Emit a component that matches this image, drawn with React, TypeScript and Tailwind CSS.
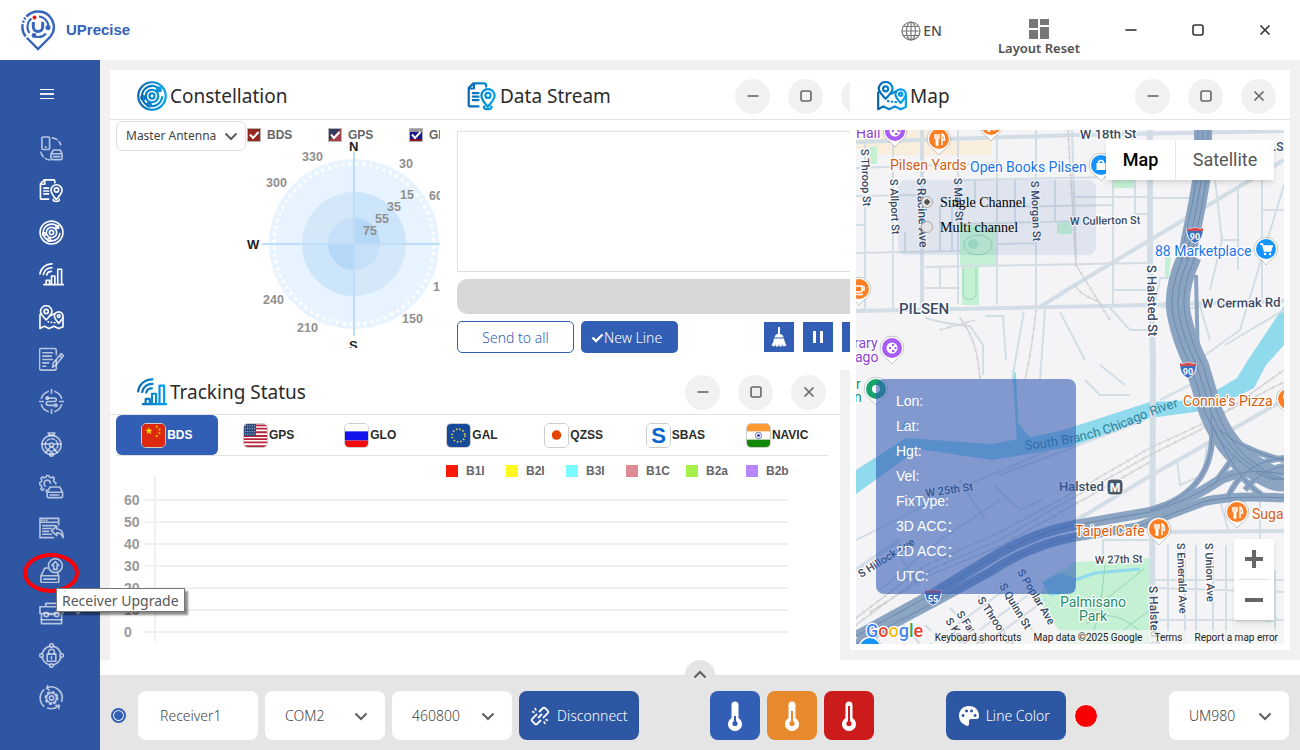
import { clsx } from 'clsx';
import type { ReactNode } from 'react';

type IconProps = { className?: string; blue?: boolean };

const Glyph = ({
  className,
  blue,
  children,
}: IconProps & { children: ReactNode }) => (
  <svg
    viewBox="0 0 26 26"
    className={clsx('shrink-0', className)}
    fill="none"
    stroke={blue ? 'url(#blueStroke)' : 'currentColor'}
    strokeWidth={blue ? 1.9 : 1.7}
    strokeLinecap="round"
    strokeLinejoin="round"
  >
    {children}
  </svg>
);

/* ---------- sidebar / panel icons ---------- */

const StreamIcon = (p: IconProps) => (
  <Glyph {...p}>
    <path d="M10 22H2.500q-1 0-1-1V6l4-4h9.500q1.500 0 1.500 1.500V5M1.500 6.500H6V2M5 10.500h5M5 13.500h5M5 16.500h5" />
    <path d="M18 22.500c-3-4-5.500-6.500-5.500-9.800a5.700 5.700 0 0 1 11.400 0C24 16 21 18.500 18 22.500Z" />
    <circle cx="18.200" cy="12.500" r="2.200" />
    <path d="M15 22c-2 3.200 8 3.200 6 0" />
  </Glyph>
);

const OrbitIcon = (p: IconProps) => (
  <Glyph {...p}>
    <circle cx="13" cy="13" r="11.900" />
    <path d="M20.500 8.500A8.700 8.700 0 1 0 21.700 14M17.500 5.500A8.700 8.700 0 0 0 13 4.300" />
    <circle cx="13" cy="13" r="5.400" />
    <circle cx="13" cy="13" r="2.200" />
    <circle cx="19" cy="7.200" r="1.500" />
    <circle cx="5.200" cy="14.500" r="1.500" />
    <circle cx="10.500" cy="20.500" r="1.500" />
  </Glyph>
);

const SignalIcon = (p: IconProps) => (
  <Glyph {...p}>
    <path d="M1 12.500A12 12 0 0 1 13.500 2M4.500 13A8.500 8.500 0 0 1 13.500 6M8 13.500A5 5 0 0 1 13 9.800" />
    <path d="M5 23.500h20.500M7.500 23v-4h3.500v4M13 23v-8.500h3.500V23M19.500 23V7.500H23.500V23" />
  </Glyph>
);

const MapIcon = (p: IconProps) => (
  <Glyph {...p}>
    <path d="M2.500 9L1 10v14.500l4.500-2.500 5 2.500 5-2.500 5 2.500L25 22.500V13" />
    <path d="M7.500 15.500C4 11.500 1.500 9.500 1.500 6.800a6 6 0 0 1 12 0C13.500 9.500 11 11.500 7.500 15.500Z" />
    <circle cx="7.500" cy="6.800" r="2.200" />
    <path d="M20.500 19c-3-3.500-4.500-5-4.500-7.300a4.500 4.500 0 0 1 9 0C25 14 23.500 15.500 20.500 19Z" />
    <circle cx="20.500" cy="11.500" r="1.400" />
    <path d="M12.500 11l3.500-2M9.500 17.500h.5M12.800 18h.5M16 18.300h.5" />
  </Glyph>
);

const LinkIcon = (p: IconProps) => (
  <Glyph {...p}>
    <rect x="3" y="1" width="8" height="13" rx="1" />
    <path d="M6.500 11.500h1M14 2c4 .5 7 3 8.500 7M2 17c1 4 4 7 9 8" strokeDasharray="5 3" />
    <path d="M15 14.500h7l2 4v5q0 1-1 1H13.500q-1 0-1-1v-5ZM12.500 18.500H24M15 21.500h6.500" />
  </Glyph>
);

const EditIcon = (p: IconProps) => (
  <Glyph {...p}>
    <path d="M18 14v8q0 2-2 2H2.500q-2 0-2-2V3.500q0-2 2-2H16q2 0 2 2V8" />
    <path d="M4 6h10M4 9.500h9M4 13h10M4 16.500h6M4 20h3" />
    <path d="M14 21l1-4.500 8-9.500 2.500 2-8 9.800ZM21.500 9l2.300 2" />
  </Glyph>
);

const TargetIcon = (p: IconProps) => (
  <Glyph {...p}>
    <path d="M16.500 2.500a11 11 0 0 1 7 7M23.500 16.500a11 11 0 0 1-7 7M9.500 23.500a11 11 0 0 1-7-7M2.500 9.500a11 11 0 0 1 7-7" />
    <path d="M13 .5v4M13 21.500v4M.5 13h4M21.500 13h4" />
    <path d="M9 9.500h7q2 0 2 1.700T16 13h-6q-2.500 0-2.500 2T10 17h5.500" />
    <circle cx="8.500" cy="9.500" r="1.300" />
    <circle cx="17.500" cy="17" r="1.300" />
  </Glyph>
);

const WheelIcon = (p: IconProps) => (
  <Glyph {...p}>
    <path d="M9.500 1h7l-1.500 2.500h-4Z" />
    <circle cx="13" cy="13.500" r="10" />
    <circle cx="13" cy="13.500" r="6.500" strokeDasharray="3 2" />
    <circle cx="13" cy="13.500" r="2" />
    <path d="M3 12.500h7.500M15.500 12.500H23M12 15.500l-5 6M14 15.500l5 6" />
    <circle cx="13" cy="23.500" r="1.800" />
  </Glyph>
);

const DeviceGearIcon = (p: IconProps) => (
  <Glyph {...p}>
    <path d="M8 16.500l-.5 1.500M5 15.500l-1.500 1.500-1.500-1.500L3 13.500l-.8-1.800L.5 11V9l1.700-.7L3 6.500l-1-2L3.500 3l2 1 1.800-.8L8 1.500h2l.7 1.700 1.800.8 2-1L16 4.500l-1 2 .8 1.800 1.700.7v1.500" />
    <path d="M6.500 12.500a3.400 3.400 0 1 1 5.500-3" />
    <path d="M11.500 13.500h10l3 5.500v4.500q0 1-1 1h-14q-1 0-1-1V19ZM8.500 19h16M11.500 21.800h9" />
  </Glyph>
);

const WindowReplyIcon = (p: IconProps) => (
  <Glyph {...p}>
    <path d="M20.500 9V2.500H1v20h14M1 6.500h19.500M3 4.500h.3M5.500 4.500h.3M8 4.500h.3" />
    <path d="M4 10h13M4 13h9M4 16h6M4 19h9" />
    <path d="M18.500 10.500L13 15.500l5.500 5v-3q5 0 6.500 5 .5-9-6.500-9Z" />
  </Glyph>
);

const UpgradeIcon = (p: IconProps) => (
  <Glyph {...p}>
    <circle cx="17" cy="8" r="7.200" />
    <path d="M17 3.800l3.800 4h-2v4h-3.600v-4h-2Z" />
    <path d="M8.500 10.500H6L2 18.500v6q0 1 1 1h16.500q1 0 1-1v-6l-1-2.500M2 18.500h18.500M5 22h12.500" />
  </Glyph>
);

const ToolboxIcon = (p: IconProps) => (
  <Glyph {...p}>
    <path d="M7 6V2.500h12V6M1 6h24v7H1ZM2.500 13v10.500h21V13M10.500 14h5" />
    <circle cx="7.500" cy="14" r="2.300" />
    <circle cx="18.500" cy="14" r="2.300" />
    <path d="M2.500 19.500h21" />
  </Glyph>
);

const LockOrbitIcon = (p: IconProps) => (
  <Glyph {...p}>
    <path d="M10.500 3.500Q5 5.500 3.500 10.500M15.500 3.500Q21 5.500 22.500 10.500M3.500 15.500q1.500 5 7 7M22.500 15.500q-1.500 5-7 7" />
    <circle cx="13" cy="2.500" r="1.800" />
    <circle cx="13" cy="23.500" r="1.800" />
    <circle cx="2.500" cy="13" r="1.800" />
    <circle cx="23.500" cy="13" r="1.800" />
    <rect x="8.500" y="11.500" width="9" height="7.500" />
    <path d="M10 11.500V9.500a3 3 0 0 1 6 0v2M13 14v2.500" />
  </Glyph>
);

const GearCycleIcon = (p: IconProps) => (
  <Glyph {...p}>
    <path d="M5 22A11.500 11.500 0 0 1 5 5M9 2.500A11.500 11.500 0 0 1 23.500 17M20.500 21.500A11.500 11.500 0 0 1 9 24M9 .8L7.800 3.500 10.500 5M20.500 24.500l.5-3.500-3.500.3" />
    <circle cx="13" cy="13.500" r="5.200" />
    <circle cx="13" cy="13.500" r="2.200" />
    <circle cx="13" cy="13.500" r="6.500" strokeDasharray="2 3.100" />
  </Glyph>
);

const NAV = [
  { label: 'Connection', Icon: LinkIcon, active: false },
  { label: 'Data Stream', Icon: StreamIcon, active: true },
  { label: 'Constellation', Icon: OrbitIcon, active: true },
  { label: 'Tracking Status', Icon: SignalIcon, active: true },
  { label: 'Map', Icon: MapIcon, active: true },
  { label: 'Record', Icon: EditIcon, active: false },
  { label: 'Target', Icon: TargetIcon, active: false },
  { label: 'Dashboard', Icon: WheelIcon, active: false },
  { label: 'Receiver Config', Icon: DeviceGearIcon, active: false },
  { label: 'Replay', Icon: WindowReplyIcon, active: false },
  { label: 'Receiver Upgrade', Icon: UpgradeIcon, active: false },
  { label: 'Tool Box', Icon: ToolboxIcon, active: false },
  { label: 'Authorization', Icon: LockOrbitIcon, active: false },
  { label: 'Settings', Icon: GearCycleIcon, active: false },
];

/* ---------- small shared parts ---------- */

const MinLine = () => (
  <svg viewBox="0 0 14 14" className="size-3.5" stroke="currentColor" strokeWidth="1.600">
    <path d="M1.500 7h11" />
  </svg>
);
const MaxBox = () => (
  <svg viewBox="0 0 14 14" className="size-3.5" fill="none" stroke="currentColor" strokeWidth="1.600">
    <rect x="2" y="2" width="10" height="10" rx="2" />
  </svg>
);
const CloseX = () => (
  <svg viewBox="0 0 14 14" className="size-3.5" stroke="currentColor" strokeWidth="1.600">
    <path d="M2.500 2.500l9 9M11.500 2.500l-9 9" />
  </svg>
);
const Chevron = ({ className }: { className?: string }) => (
  <svg
    viewBox="0 0 14 14"
    className={clsx('pointer-events-none size-3.5', className)}
    fill="none"
    stroke="#5e5e5e"
    strokeWidth="2"
  >
    <path d="M1.500 4.500L7 10l5.500-5.500" />
  </svg>
);

const PanelButtons = () => (
  <div className="flex gap-[18px] text-[#666]">
    {[
      { label: 'Minimize', Icon: MinLine },
      { label: 'Maximize', Icon: MaxBox },
      { label: 'Close', Icon: CloseX },
    ].map(({ label, Icon }) => (
      <button
        key={label}
        aria-label={label}
        className="flex size-[35px] items-center justify-center rounded-full bg-[#f1f1f1]"
      >
        <Icon />
      </button>
    ))}
  </div>
);

const PanelHeader = ({
  title,
  icon,
  className,
  buttons = true,
}: {
  title: string;
  icon: ReactNode;
  className?: string;
  buttons?: boolean;
}) => (
  <div
    className={clsx(
      'flex shrink-0 items-center justify-between border-b border-[#e2e2e2] pr-[14px] pl-[27px]',
      className
    )}
  >
    <h2 className="flex items-center gap-[3px] text-[19px] whitespace-nowrap text-[#2b2b2b]">
      {icon}
      {title}
    </h2>
    {buttons && <PanelButtons />}
  </div>
);

/* ---------- header ---------- */

const Logo = () => (
  <svg viewBox="0 0 34 41" className="h-[41px] w-[34px]" fill="none" stroke="#3564bd">
    <path d="M17 1.500a15.500 15.500 0 0 1 12.500 25L17 39 6 28" strokeWidth="2.400" />
    <path d="M17 1.500A15.500 15.500 0 0 0 6 28" strokeWidth="2.400" strokeDasharray="13 1.500 2 1.500 2 1.500" />
    <path d="M18 6.500a10.500 10.500 0 0 1 9 13.500M25 23.500a10.500 10.500 0 0 1-10.500 3.200M8.500 23A10.500 10.500 0 0 1 10.500 8.500" strokeWidth="2" />
    <path d="M12.300 12v4.800a4.700 4.700 0 0 0 9.400 0V12" strokeWidth="3" />
    <circle cx="13.500" cy="7.500" r="2" fill="#f01010" stroke="none" />
    <circle cx="27" cy="17.500" r="2.500" fill="#3564bd" stroke="none" />
    <circle cx="13" cy="25.500" r="2.400" fill="#3564bd" stroke="none" />
  </svg>
);

const Header = () => (
  <header className="flex h-[60px] shrink-0 items-center justify-between bg-white pr-[28px] pl-[21px]">
    <div className="flex items-center gap-[11px]">
      <Logo />
      <h1 className="font-['Liberation_Sans',sans-serif] text-[15px] font-bold text-[#3461b9]">
        UPrecise
      </h1>
    </div>
    <div className="flex items-center">
      <button className="mr-[56px] flex items-center gap-0.5 pt-0.5 text-sm font-medium text-[#4d4d4d]">
        <svg viewBox="0 0 20 20" className="size-5" fill="none" stroke="#777" strokeWidth="1.200">
          <circle cx="10" cy="10" r="9" />
          <ellipse cx="10" cy="10" rx="4.500" ry="9" />
          <path d="M10 1v18M1 10h18M2.500 5.500h15M2.500 14.500h15" />
        </svg>
        EN
      </button>
      <button className="mr-[44px] flex flex-col items-center pt-4 text-[13px] leading-[17px] font-semibold text-[#505050]">
        <svg viewBox="0 0 20 20" className="mb-px size-5" fill="#777">
          <rect width="9" height="9" />
          <rect x="11" width="9" height="6" />
          <rect y="11" width="9" height="9" />
          <rect x="11" y="8" width="9" height="12" />
        </svg>
        Layout Reset
      </button>
      <div className="flex gap-[53px] text-[#333]">
        <button aria-label="Minimize window"><MinLine /></button>
        <button aria-label="Maximize window"><MaxBox /></button>
        <button aria-label="Close window"><CloseX /></button>
      </div>
    </div>
  </header>
);

/* ---------- sidebar ---------- */

const Sidebar = () => (
  <nav className="relative z-10 w-[100px] shrink-0 bg-[#2e56a3] text-white">
    <button aria-label="Menu" className="mt-[25px] ml-10 flex h-[22px] flex-col gap-[3px] pt-1">
      <span className="h-px w-3.5 bg-white" />
      <span className="h-0.5 w-3.5 bg-white/90" />
      <span className="h-px w-3.5 bg-white" />
    </button>
    <ul className="mt-5 flex h-[592px] flex-col justify-between">
      {NAV.map(({ label, Icon, active }) => (
        <li key={label} className="relative">
          <button aria-label={label} className="flex h-[42px] w-full items-center justify-center pl-0.5">
            <Icon className={clsx('size-[25px]', active ? 'text-white' : 'text-white/65')} />
          </button>
          {label === 'Tool Box' && (
            <span className="absolute top-[19px] left-[74px] border-x-4 border-t-4 border-x-transparent border-t-[#a9bcdf]" />
          )}
          {label === 'Receiver Upgrade' && (
            <>
              <svg viewBox="0 0 58 42" className="pointer-events-none absolute top-0.5 left-[22px] h-[42px] w-[58px]">
                <ellipse cx="29" cy="21" rx="26" ry="18" fill="none" stroke="#fb0007" strokeWidth="4" />
              </svg>
              <div
                role="tooltip"
                className="absolute top-[38px] left-[56px] z-20 h-6 border border-[#767676] bg-white px-[5px] text-sm leading-[23px] whitespace-nowrap text-[#575757] shadow-[3px_3px_2px_rgba(0,0,0,0.45)]"
              >
                Receiver Upgrade
              </div>
            </>
          )}
        </li>
      ))}
    </ul>
  </nav>
);

/* ---------- constellation ---------- */

const FLAG_BOXES = [
  { name: 'BDS', bg: 'bg-[#93281f]' },
  { name: 'GPS', bg: 'bg-[linear-gradient(135deg,#343a5c_50%,#a5404a_50%)]' },
  { name: 'GLO', bg: 'bg-[linear-gradient(#999_25%,#1a1a90_25%_80%,#8f1020_80%)]' },
];

const BEARINGS = [
  ['330', 302, 161],
  ['300', 266, 187],
  ['30', 399, 168],
  ['60', 429, 200],
  ['240', 263, 304],
  ['210', 297, 332],
  ['150', 402, 323],
  ['120', 433, 291],
  ['15', 400, 199],
  ['35', 387, 211],
  ['55', 375, 223],
  ['75', 363, 235],
] as const;

const SkyPlot = () => (
  <svg
    viewBox="110 138 330 210"
    className="pointer-events-none -mt-[11px] block w-full font-['Liberation_Sans',sans-serif] font-bold"
  >
    <circle cx="354" cy="244" r="85" fill="#e7f3fe" />
    {Array.from({ length: 72 }, (_, i) => (
      <path key={i} d="M354 161l2.200 4.500h-4.400Z" fill="#fff" transform={`rotate(${i * 5 + 2} 354 244)`} />
    ))}
    <circle cx="354" cy="244" r="52" fill="#d5e8fa" />
    <path d="M354 244V192A52 52 0 0 1 406 244ZM354 244v52A52 52 0 0 1 302 244Z" fill="#cde5fa" />
    <circle cx="354" cy="244" r="26" fill="#c5e0f8" />
    <path d="M354 244V218A26 26 0 0 1 380 244ZM354 244v26A26 26 0 0 1 328 244Z" fill="#b5d8f7" />
    <path d="M354 152v184M262 244h178" stroke="#bfdcf9" strokeWidth="2" />
    <g fontSize="12.500" fill="#8f8f8f">
      {BEARINGS.map(([t, x, y]) => (
        <text key={t} x={x} y={y}>
          {t}
        </text>
      ))}
    </g>
    <g fontSize="13" fill="#222">
      <text x="349" y="151">N</text>
      <text x="247" y="249">W</text>
      <text x="349" y="350">S</text>
    </g>
  </svg>
);

const Constellation = () => (
  <section className="overflow-hidden bg-white">
    <PanelHeader
      title="Constellation"
      icon={<OrbitIcon blue className="size-[30px]" />}
      className="h-[50px] pt-[3px]"
      buttons={false}
    />
    <div className="flex h-[29px] items-center pl-1.5">
      <div className="relative mt-0.5 w-[130px] shrink-0">
        <select
          aria-label="Antenna"
          className="h-[30px] w-full appearance-none rounded-md border border-[#e0e0e0] bg-white pl-[9px] text-xs text-[#444]"
        >
          <option>Master Antenna</option>
        </select>
        <Chevron className="absolute top-2 right-2" />
      </div>
      {FLAG_BOXES.map(({ name, bg }) => (
        <label
          key={name}
          className="relative flex w-[81px] shrink-0 items-center gap-1.5 pl-px font-['Liberation_Sans',sans-serif] text-xs font-bold text-[#666]"
        >
          <input
            type="checkbox"
            defaultChecked
            className={clsx('size-3.5 shrink-0 appearance-none border border-[#b5b5b5]', bg)}
          />
          <svg viewBox="0 0 14 14" className="pointer-events-none absolute left-px size-3.5" fill="none" stroke="#fff" strokeWidth="2">
            <path d="M3 6.500l3 3.500 5.500-6" />
          </svg>
          {name}
        </label>
      ))}
    </div>
    <SkyPlot />
  </section>
);

/* ---------- data stream ---------- */

const DataStream = () => (
  <section className="overflow-hidden bg-white">
    <div className="w-[450px]">
      <PanelHeader
        title="Data Stream"
        icon={<StreamIcon blue className="size-[30px]" />}
        className="h-[50px] pt-[3px]"
      />
      <div className="pt-[11px] pl-[17px]">
        <textarea aria-label="Received data" className="block h-[141px] w-full resize-none border border-[#e0e0e0]" />
        <input aria-label="Command" disabled className="mt-[7px] h-[35px] w-full rounded-[10px] bg-[#d8d8d8] px-3" />
        <div className="mt-[7px] flex items-center text-sm font-light">
          <button className="h-8 w-[117px] rounded-[5px] border border-[#335eb5] pt-px text-[#335eb5]">
            Send to all
          </button>
          <button className="ml-[7px] flex h-8 w-[97px] items-center rounded-[5px] bg-[#335eb5] pt-px pl-2.5 text-white">
            <svg viewBox="0 0 13 13" className="size-[13px]" fill="none" stroke="#fff" strokeWidth="2.400">
              <path d="M1.500 6.500l3.500 3.500 6.500-6.500" />
            </svg>
            New Line
          </button>
          <button aria-label="Clear" className="ml-[86px] flex size-[30px] items-center justify-center bg-[#335eb5]">
            <svg viewBox="0 0 16 20" className="h-5 w-4" fill="#fff">
              <path d="M7 0h2v7q3 0 3.500 3.500h-9Q4 7 7 7ZM3 11.500h10q.5 4 2.500 7l-3 1-1.500-2-.5 2.200-2-.2L8 17l-.8 2.500-2 .2L5 17.500l-1.500 2-3-1q2-3 2.500-7Z" />
            </svg>
          </button>
          <button aria-label="Pause" className="ml-[9px] flex size-[30px] items-center justify-center gap-1 bg-[#335eb5]">
            <span className="h-3 w-[3px] bg-white" />
            <span className="h-3 w-[3px] bg-white" />
          </button>
          <button aria-label="Save" className="ml-[9px] size-[30px] bg-[#335eb5]" />
        </div>
      </div>
    </div>
  </section>
);

/* ---------- tracking status ---------- */

const STAR = 'M0-4l1 2.800h3L1.600.6l.9 3L0 1.800l-2.500 1.800.9-3L-4-1.200h3Z';

const FLAGS: Record<string, ReactNode> = {
  BDS: (
    <>
      <rect width="25" height="25" fill="#de2910" />
      <path d={STAR} transform="translate(7.500 7.500)" fill="#ffde00" />
      <path d="M15 2h2v2h-2ZM18 5h2v2h-2ZM18 9h2v2h-2ZM15 12h2v2h-2Z" fill="#e8b800" />
    </>
  ),
  GPS: (
    <>
      <rect width="25" height="25" fill="#fff" />
      <path d="M0 1.500h25M0 5h25M0 9h25M0 13h25M0 16.500h25M0 20h25M0 24h25" stroke="#b5263c" strokeWidth="2" />
      <rect width="13" height="13" fill="#2f4a7d" />
      <path d="M1 2h11M1 5h11M1 8h11M1 11h11" stroke="#c9d3e6" strokeDasharray="1 1.500" />
    </>
  ),
  GLO: (
    <>
      <rect width="25" height="25" fill="#fff" />
      <rect y="8" width="25" height="10" fill="#1414ef" />
      <rect y="18" width="25" height="7" fill="#f50a0a" />
    </>
  ),
  GAL: (
    <>
      <rect width="25" height="25" fill="#174a99" />
      <circle cx="12.500" cy="12.500" r="7" fill="none" stroke="#f4e04a" strokeWidth="1.800" strokeDasharray="1.500 2.170" />
    </>
  ),
  QZSS: (
    <>
      <rect width="25" height="25" fill="#fff" />
      <circle cx="12.500" cy="12" r="5.200" fill="#e64400" />
    </>
  ),
  SBAS: (
    <>
      <rect width="25" height="25" fill="#fff" />
      <text x="12.500" y="21" textAnchor="middle" fontSize="24" fontWeight="bold" fill="#0c66cf">
        S
      </text>
    </>
  ),
  NAVIC: (
    <>
      <rect width="25" height="25" fill="#fff" />
      <rect width="25" height="8" fill="#ff9a35" />
      <rect y="17" width="25" height="8" fill="#138808" />
      <circle cx="12.500" cy="12.500" r="3.500" fill="#e8e8ff" stroke="#7676bb" />
      <circle cx="12.500" cy="12.500" r="1.400" fill="#22228a" />
    </>
  ),
};

const BANDS = [
  { name: 'B1I', bg: 'bg-[#fb1a0a]' },
  { name: 'B2I', bg: 'bg-[#fff720]' },
  { name: 'B3I', bg: 'bg-[#7afbff]' },
  { name: 'B1C', bg: 'bg-[#de8a92]' },
  { name: 'B2a', bg: 'bg-[#a4f04c]' },
  { name: 'B2b', bg: 'bg-[#b886fb]' },
];

const TrackingStatus = () => (
  <section className="mr-2.5 flex flex-1 flex-col bg-white">
    <PanelHeader title="Tracking Status" icon={<SignalIcon blue className="size-[30px]" />} className="h-[45px]" />
    <div className="mr-3 ml-1.5 grid grid-cols-7 border-b border-[#e2e2e2] font-['Liberation_Sans',sans-serif]">
      {Object.keys(FLAGS).map((name, i) => (
        <button
          key={name}
          className={clsx(
            'flex h-10 items-center justify-center gap-px rounded-md text-xs font-bold',
            i === 0 ? 'bg-[#335eb5] text-white' : 'text-[#2b2b2b]'
          )}
        >
          <span className="size-[25px] overflow-hidden rounded-[5px] border border-[#ccc]">
            <svg viewBox="0 0 25 25" className="size-full">
              {FLAGS[name]}
            </svg>
          </span>
          {name}
        </button>
      ))}
    </div>
    <ul className="flex h-[30px] items-center justify-end pr-[34px] font-['Liberation_Sans',sans-serif] text-xs font-bold text-[#666]">
      {BANDS.map(({ name, bg }) => (
        <li key={name} className="flex w-[60px] items-center gap-2">
          <span className={clsx('size-3', bg)} />
          {name}
        </li>
      ))}
    </ul>
    <svg viewBox="110 486 730 174" className="block w-full overflow-visible">
      <path d="M155 477v165" stroke="#f0f0f0" strokeWidth="2" />
      {[60, 50, 40, 30, 20, 10, 0].map((v, i) => (
        <g key={v}>
          <path d={`M145 ${500 + i * 22}h643`} stroke="#f0f0f0" strokeWidth="2" />
          <text
            x="124"
            y={505 + i * 22}
            className="font-['Liberation_Sans',sans-serif] text-[14px] font-bold"
            fill="#999"
          >
            {v}
          </text>
        </g>
      ))}
    </svg>
  </section>
);

/* ---------- map ---------- */

const FORK = 'M-4-5v3.500q0 1.500 1.300 1.500V6h1.400V0Q0 0 0-1.500V-5M-2-5v4M3 6V-5q2.500 1 2.500 6H3';

const Pin = ({ x, y, color, kind }: { x: number; y: number; color: string; kind?: string }) => (
  <g transform={`translate(${x} ${y})`}>
    <path d="M0 16q-3-4-7-6.500a11.800 11.800 0 1 1 14 0Q3 12 0 16Z" fill="#fff" stroke="#0003" strokeWidth="1" />
    <circle r="10" fill={color} />
    {kind === 'food' && <path d={FORK} fill="none" stroke="#fff" strokeWidth="1.500" />}
    {kind === 'cart' && (
      <>
        <path d="M-6-5h2.500l2 7h6l1.500-5h-8" fill="none" stroke="#fff" strokeWidth="1.600" />
        <path d="M-3-3H6.500L5 2H-1.500Z" fill="#fff" />
        <circle cx="-1" cy="5" r="1.200" fill="#fff" />
        <circle cx="4" cy="5" r="1.200" fill="#fff" />
      </>
    )}
    {kind === 'bag' && (
      <>
        <rect x="-4.500" y="-2" width="9" height="7" fill="#fff" />
        <path d="M-2.500-2a2.500 2.500 0 0 1 5 0" fill="none" stroke="#fff" strokeWidth="1.500" />
      </>
    )}
    {kind === 'palette' && (
      <>
        <circle r="5.500" fill="#fff" />
        <path d="M-3-1h2v2h-2ZM0-4h2v2H0ZM2.500-1h2v2h-2ZM0 2h2.500v2H0Z" fill={color} />
      </>
    )}
    {kind === 'cup' && <path d="M-4-3h7v4q0 2-2 2h-3q-2 0-2-2ZM3-2h2v3H3M-5 5.500h9" fill="none" stroke="#fff" strokeWidth="1.600" />}
    {kind === 'dot' && <circle r="4" fill="#fff" />}
  </g>
);

const Shield = ({ x, y, n }: { x: number; y: number; n: string }) => (
  <g transform={`translate(${x} ${y})`}>
    <path d="M-8-7L-5.500-6 0-7.500 5.500-6 8-7Q9.500 4 0 8.500-9.500 4-8-7Z" fill="#3a70c4" stroke="#fff" strokeWidth="1" />
    <path d="M-8-7L-5.500-6 0-7.500 5.500-6 8-7V-4H-8Z" fill="#d64b4b" />
    <text y="4.500" textAnchor="middle" fontSize="9" fontWeight="bold" fill="#fff">
      {n}
    </text>
  </g>
);

// text, x, y, rotation, size
const STREETS = [
  ['W 18th St', 1080, 139, -1, 13],
  ['.S', 1273, 151, 0, 12],
  ['S Throop St', 861, 149, 88, 11],
  ['S Allport St', 890, 179, 88, 11],
  ['S Racine Ave', 917, 178, 88, 12],
  ['S May St', 954, 178, 88, 11],
  ['S Morgan St', 1031, 181, 88, 11],
  ['W Cullerton St', 1070, 225, -1, 11],
  ['S Halsted St', 1147, 265, 89, 13],
  ['W Cermak Rd', 1202, 308, -1, 13],
  ['Halsted', 1059, 491, 0, 13],
  ['W 25th St', 926, 497, -8, 11],
  ['S Hillock Ave', 861, 578, -32, 11],
  ['W 27th St', 1095, 564, -2, 11],
  ['S Emerald Ave', 1177, 543, 88, 11],
  ['S Union Ave', 1205, 543, 88, 11],
  ['S Halsted St', 1149, 586, 88, 12],
  ['S Poplar Ave', 1017, 572, 59, 11],
  ['S Quinn St', 999, 586, 59, 11],
  ['S Throop St', 977, 600, 56, 11],
  ['S Farrell St', 956, 614, 56, 11],
  ['S Keeley St', 945, 621, 56, 11],
] as const;

const PLACES = [
  ['Hall', 856, 138, '#8a45cf'],
  ['Pilsen Yards', 890, 170, '#d65b10'],
  ['Open Books Pilsen', 970, 172, '#1a73e8'],
  ['88 Marketplace', 1155, 256, '#1a73e8'],
  ['rary', 854, 348, '#8a45cf'],
  ['ago', 855, 362, '#8a45cf'],
  ['r', 856, 389, '#1e8e65'],
  ['n', 854, 402, '#1e8e65'],
  ["Connie's Pizza", 1183, 406, '#d65b10'],
  ['Taipei Cafe', 1075, 536, '#d65b10'],
  ['Suga', 1252, 519, '#d65b10'],
  ['Palmisano', 1060, 607, '#1e8e65'],
  ['Park', 1079, 621, '#1e8e65'],
] as const;

const MINOR_ROADS =
  'M856 168L1000 163M856 196L922 195M856 225h9M960 224L1075 221M856 253L960 251M997 244L1036 243M997 207L1113 205M925 267L1147 263M960 180L1113 177' +
  'M865 130V310M893 130V310M958 130V304M997 130V305M1036 130V307M1015 180V225M1055 180V222M1072 130L1076 260M1113 178V305M1135 175V214' +
  'M1075 197H1150M1135 214H1150M1153 198H1190M1153 155L1190 154M1113 290H1150M1155 304L1160 278H1168M1238 190V270M1262 180V300M1262 210H1284M1220 240H1240M1215 180L1222 240L1210 290M1100 155L1150 150' +
  'M940 268V288M925 288H960M952 205V251M975 180V208M905 253V232M940 205V251M1036 268V300' +
  'M925 318Q950 325 970 326L983 345V375M985 316H1003L1006 360M1024 311L1012 380M1045 310L1040 380M1060 312L1085 360M1110 308L1130 330H1150' +
  'M1155 305Q1185 312 1200 306L1210 340M1284 185L1240 330L1190 366M1284 310L1225 345' +
  'M856 540L960 488L1050 450M880 590L940 540L1000 500M900 556L918 585M960 480L985 520M995 486L1020 510L1042 500M1000 475L1145 420' +
  'M1155 580H1284M1155 588L1284 592M1168 545V644M1185 545V644M1196 545V644M1213 545V644M1226 545V644M1155 620H1284M1103 555V540H1150M1220 500L1228 530M1260 500V540M1275 570V644' +
  'M930 644L1010 586M960 644L1035 590M985 644L1045 600M925 625L945 644M950 608L985 644M978 596L1015 644M1000 582L1042 644M890 610L920 644' +
  'M1160 400L1200 380M1085 380L1100 395H1130M1100 365L1125 385M1177 460L1180 485L1203 475L1207 445';

const MAJOR_ROADS =
  'M856 142L1075 135L1284 131M856 311L1150 305L1284 301M922 130V235V310M1040 307L1075 285L1150 240L1284 160M856 570L900 540M1070 524L1150 476L1210 442L1284 400M1155 532L1284 531';

const RAILS =
  'M960 318Q978 340 980 380M1036 310Q1032 350 1025 380M1075 285Q1080 295 1100 302M1068 130L1076 265L1110 320M856 625L930 570L1000 540L1060 505L1150 455L1200 430L1284 370M856 618L925 566L1000 532L1060 500L1150 448L1200 425L1284 382M870 612L930 575L1000 546L1065 510L1150 462M940 330L975 320';

const I90 = 'M1190 255Q1174 290 1179 315T1197 366L1211 412Q1225 448 1252 466T1284 478';
const I90_RAMP = 'M1211 415Q1216 455 1200 478T1150 510M1213 425Q1235 478 1262 495M1228 497Q1243 462 1284 458M1220 430Q1245 452 1284 460M1235 455L1215 483M1245 490Q1260 470 1284 466';
const I55 = 'M856 636L927 597 983 563Q1030 533 1075 525L1150 512Q1190 500 1215 483T1284 474';
const I55_SOUTH = 'M856 644L935 602 990 572Q1030 545 1075 537L1137 527 1203 502Q1230 495 1284 498';

const MapCanvas = () => (
  <svg
    viewBox="856 130 428 514"
    preserveAspectRatio="xMinYMin slice"
    className="absolute inset-0 size-full font-[Roboto,sans-serif]"
    fill="none"
  >
    <rect x="856" y="130" width="428" height="514" fill="#f4f3f5" />
    <path d="M856 130h90v12l46-2v15H870l-14-8Z" fill="#f8eedb" />
    <path
      d="M870 147h7v17h-7ZM960 225h37v41h-18v39h-17v-39h-2ZM1057 222h15v12h-15ZM1112 178h23v10h-23ZM1165 257h6l-2 20h-4ZM1265 617h12v5h-12ZM1048 578L1075 562 1150 558V644H1068L1038 600Z"
      fill="#c4f0d4"
    />
    <ellipse cx="978" cy="245" rx="14" ry="10" stroke="#93d6b5" />
    <circle cx="973" cy="244" r="5" fill="#a4e3c2" />
    <path d="M963 268V295a7 7 0 0 0 13 0V268" stroke="#93d6b5" />
    <path d="M1042 582L1060 573 1075 578V592L1062 594 1050 596Z" fill="#8fdaec" />
    <path d="M1075 580L1095 573 1140 569" stroke="#8fdaec" strokeWidth="3" />
    <path d="M1090 640L1105 600 1145 568M1105 565L1100 610M1085 625Q1110 600 1150 640M1150 610L1110 640" stroke="#93d6b5" />
    {/* river */}
    <path d="M1284 306V345L1266 365 1254 388 1210 410 1150 418 1070 447 992 460 918 449 856 494V470L906 438 992 444 1060 431 1150 402 1200 400 1237 378 1248 360Z" fill="#8fdaec" />
    <path d="M1012 370l4 3 2 50 17 20-18 3-3-55Z" fill="#8fdaec" />
    <path d="M905 420l5 8h-8Z" fill="#8fdaec" />
    <path d={MINOR_ROADS} stroke="#d3dde5" strokeWidth="2" />
    <path d={MAJOR_ROADS} stroke="#d3dde5" strokeWidth="4" />
    <path d="M1150 130V265L1153 360 1152 644" stroke="#d3dde5" strokeWidth="6" />
    <path d={RAILS} stroke="#cfd1d4" strokeWidth="1.200" />
    <path d={RAILS} stroke="#cfd1d4" strokeWidth="3" strokeDasharray="1 8" />
    {/* interstates */}
    <g stroke="#8ba4c2">
      <path d="M1203 130V170L1197 205 1184 270" strokeWidth="18" />
      <path d={I90} strokeWidth="24" />
      <path d={I90_RAMP} strokeWidth="6" />
      <path d={I55} strokeWidth="10" />
      <path d={I55_SOUTH} strokeWidth="9" />
      <path d="M1196 275L1198 365" strokeWidth="4" />
    </g>
    <g stroke="#6c89b0">
      <path d="M1203 130V170L1197 205 1186 260M1208 130V170L1202 205 1192 255M1198 130V170L1192 205 1180 260" />
      <path d={I90} />
      <path d={I90} transform="translate(6 0)" />
      <path d={I90} transform="translate(-6 0)" />
      <path d={I90_RAMP} />
      <path d={I55} />
      <path d={I55_SOUTH} />
    </g>
    <path id="riverLine" d="M1025 450Q1090 443 1130 425T1195 403" />
    <g fontWeight="500" fill="#3a4a63" stroke="#fff" strokeWidth="2.500" paintOrder="stroke" strokeLinejoin="round">
      {STREETS.map(([t, x, y, r, s]) => (
        <text key={`${t}${y}`} transform={`translate(${x} ${y}) rotate(${r})`} fontSize={s}>
          {t}
        </text>
      ))}
      <text x="899" y="314" fontSize="15">PILSEN</text>
    </g>
    <text fontSize="13" fill="#2f839f">
      <textPath href="#riverLine">South Branch Chicago River</textPath>
    </text>
    <g fontSize="14" stroke="#fff" strokeWidth="2.500" paintOrder="stroke" strokeLinejoin="round">
      {PLACES.map(([t, x, y, fill]) => (
        <text key={`${t}${y}`} x={x} y={y} fill={fill}>
          {t}
        </text>
      ))}
    </g>
    <Shield x={1195} y={235} n="90" />
    <Shield x={1188} y={370} n="90" />
    <Shield x={933} y={597} n="55" />
    <Pin x={895} y={131} color="#a85cf5" kind="palette" />
    <Pin x={939} y={139} color="#fb7f24" kind="food" />
    <Pin x={991} y={125} color="#fb7f24" kind="food" />
    <Pin x={1101} y={165} color="#1493fb" kind="bag" />
    <Pin x={1266} y={249} color="#1493fb" kind="cart" />
    <Pin x={859} y={289} color="#fb7f24" kind="cup" />
    <Pin x={892} y={348} color="#a85cf5" kind="palette" />
    <Pin x={876} y={389} color="#17a46a" kind="dot" />
    <Pin x={1288} y={399} color="#fb7f24" kind="food" />
    <Pin x={1159} y={529} color="#fb7f24" kind="food" />
    <Pin x={1237} y={512} color="#fb7f24" kind="food" />
    <Pin x={870} y={648} color="#1493fb" kind="dot" />
    <rect x="1107" y="479" width="16" height="16" rx="4" fill="#46566b" stroke="#fff" />
    <text x="1115" y="491.500" textAnchor="middle" fontSize="12" fontWeight="900" fill="#fff">M</text>
    <text x="866" y="637" fontSize="18" fontWeight="500" stroke="#fff" strokeWidth="2.500" paintOrder="stroke">
      <tspan fill="#4285f4">G</tspan>
      <tspan fill="#ea4335">o</tspan>
      <tspan fill="#fbbc05">o</tspan>
      <tspan fill="#4285f4">g</tspan>
      <tspan fill="#34a853">l</tspan>
      <tspan fill="#ea4335">e</tspan>
    </text>
  </svg>
);

const READINGS = ['Lon:', 'Lat:', 'Hgt:', 'Vel:', 'FixType:', '3D ACC：', '2D ACC：', 'UTC:'];

const MapPanel = () => (
  <section className="mb-2.5 flex flex-col bg-white">
    <PanelHeader title="Map" icon={<MapIcon blue className="size-[30px]" />} className="h-[50px] pt-[3px]" />
    <div className="relative mx-1.5 mt-2.5 mb-1.5 flex-1 overflow-hidden font-[Roboto,sans-serif]">
      <MapCanvas />
      <div className="absolute top-[10px] right-[10px] flex h-10 bg-white text-lg leading-10 shadow-md">
        <button className="w-[69px] font-medium text-black">Map</button>
        <button className="w-[99px] border-l border-[#e6e6e6] text-[#565656]">Satellite</button>
      </div>
      <fieldset className="absolute top-[50px] left-[42px] h-[75px] w-[198px] rounded-lg bg-[#345eb5]/10 pl-[23px] font-['Liberation_Serif',serif] text-sm text-black">
        {['Single Channel', 'Multi channel'].map((name, i) => (
          <label key={name} className={clsx('flex h-[25px] items-center gap-[7px]', i === 0 && 'mt-[9px]')}>
            <input
              type="radio"
              name="channel"
              defaultChecked={i === 0}
              className="size-3 appearance-none rounded-full border border-[#aaa] bg-[#e4e4e4] checked:bg-[radial-gradient(#555_35%,#e4e4e4_42%)]"
            />
            <span className="pt-0.5">{name}</span>
          </label>
        ))}
      </fieldset>
      <dl className="absolute top-[249px] left-5 h-[215px] w-[200px] rounded-lg bg-[#345eb5]/60 py-2.5 pl-5 font-['Liberation_Sans','Noto_Sans_CJK_SC',sans-serif] text-sm text-white">
        {READINGS.map((name) => (
          <dt key={name} className="h-[25px] leading-[25px]">
            {name}
          </dt>
        ))}
      </dl>
      <div className="absolute right-[10px] bottom-6 flex w-10 flex-col items-center bg-white text-[#666] shadow-md">
        <button aria-label="Zoom in" className="flex size-10 items-center justify-center">
          <svg viewBox="0 0 18 18" className="size-[18px]" stroke="currentColor" strokeWidth="4">
            <path d="M9 0v18M0 9h18" />
          </svg>
        </button>
        <span className="h-px w-[30px] bg-[#e0e0e0]" />
        <button aria-label="Zoom out" className="flex size-10 items-center justify-center">
          <svg viewBox="0 0 18 18" className="size-[18px]" stroke="currentColor" strokeWidth="4">
            <path d="M0 9h18" />
          </svg>
        </button>
      </div>
      <div className="absolute right-0 bottom-0 flex h-3.5 items-center gap-3 bg-[#f5f5f5]/75 pr-1.5 pl-1 text-[10px] text-[#222]">
        <a href="#shortcuts">Keyboard shortcuts</a>
        <span>Map data ©2025 Google</span>
        <a href="#terms">Terms</a>
        <a href="#report">Report a map error</a>
      </div>
    </div>
  </section>
);

/* ---------- footer ---------- */

const FooterSelect = ({ label, value }: { label: string; value: string }) => (
  <div className="relative w-[120px]">
    <select
      aria-label={label}
      className="h-[49px] w-full appearance-none rounded-lg bg-white pl-5 text-sm font-light text-[#444]"
    >
      <option>{value}</option>
    </select>
    <Chevron className="absolute top-[18px] right-[17px]" />
  </div>
);

const TEMPS = [
  { label: 'Cold start', bg: 'bg-[#335eb5]', stroke: '#335eb5', top: 15 },
  { label: 'Warm start', bg: 'bg-[#e8892e]', stroke: '#e8892e', top: 10 },
  { label: 'Hot start', bg: 'bg-[#cc1b1b]', stroke: '#cc1b1b', top: 5 },
];

const Footer = () => (
  <footer className="relative mt-[15px] flex h-[75px] items-center justify-between bg-[#e5e5e5] pt-1.5 pr-[11px] pl-[11px]">
    <button
      aria-label="Collapse"
      className="absolute -top-[15px] left-1/2 flex h-[22px] w-[30px] -translate-x-1/2 items-end justify-center rounded-t-full bg-[#e5e5e5]"
    >
      <Chevron className="rotate-180" />
    </button>
    <div className="flex items-center gap-[7px]">
      <input
        type="radio"
        aria-label="Port active"
        defaultChecked
        className="mr-[5px] size-[15px] appearance-none rounded-full border-2 border-[#335eb5] bg-[#335eb5] shadow-[inset_0_0_0_1px_white]"
      />
      <input
        aria-label="Receiver"
        defaultValue="Receiver1"
        className="h-[49px] w-[120px] rounded-lg bg-white pl-[22px] text-sm font-light text-[#444]"
      />
      <FooterSelect label="Port" value="COM2" />
      <FooterSelect label="Baud rate" value="460800" />
      <button className="flex h-[49px] w-[120px] items-center gap-[7px] rounded-lg bg-[#2d56a3] pl-[11px] text-sm font-light text-white">
        <svg viewBox="0 0 20 20" className="size-5" fill="none" stroke="#fff" strokeWidth="1.800">
          <path d="M9 6l4-4q1-.8 2 0l3 3q.8 1 0 2l-5 5M11 14l-4 4q-1 .8-2 0l-3-3q-.8-1 0-2l5-5M8 12l4-4M5 2l1 2.500M2 5.500l2.500 1M15 18l-1-2.500M18 14.500l-2.500-1" />
        </svg>
        Disconnect
      </button>
    </div>
    <div className="flex gap-[7px]">
      {TEMPS.map(({ label, bg, stroke, top }) => (
        <button key={label} aria-label={label} className={clsx('flex h-[49px] w-[50px] items-center justify-center rounded-lg', bg)}>
          <svg viewBox="0 0 16 30" className="h-[30px] w-4">
            <path d="M4.500 4a3.500 3.500 0 0 1 7 0V17a7 7 0 1 1-7 0Z" fill="#fff" />
            <path d={`M8 ${top}V22`} stroke={stroke} strokeWidth="2" />
            <circle cx="8" cy="22.500" r="2.600" fill={stroke} />
          </svg>
        </button>
      ))}
    </div>
    <div className="flex items-center gap-2">
      <button className="flex h-[49px] w-[120px] items-center gap-1.5 rounded-lg bg-[#2d56a3] pl-3 text-sm font-light text-white">
        <svg viewBox="0 0 22 22" className="size-[22px]" fill="#fff">
          <path
            fillRule="evenodd"
            d="M11 1C5 1 1 5 1 11q0 7 8 10 2 0 2-2v-3q0-2 2-2h6q2 0 2-3C21 5 17 1 11 1ZM5 9a1.500 1.500 0 1 0 .1 0M8.500 4.500a1.500 1.500 0 1 0 .1 0M13.500 4.500a1.500 1.500 0 1 0 .1 0M17 9a1.500 1.500 0 1 0 .1 0"
          />
        </svg>
        Line Color
      </button>
      <button aria-label="Selected color" className="size-6 rounded-full border border-white bg-[#fb0000]" />
    </div>
    <FooterSelect label="Model" value="UM980" />
  </footer>
);

const App = () => (
  <div className="flex min-h-screen flex-col bg-white font-['Noto_Sans',sans-serif]">
    <svg className="absolute size-0" aria-hidden="true">
      <linearGradient id="blueStroke" gradientUnits="userSpaceOnUse" x1="0" y1="0" x2="26" y2="0">
        <stop offset="0" stopColor="#0a63ab" />
        <stop offset="1" stopColor="#00a6f2" />
      </linearGradient>
    </svg>
    <Header />
    <div className="flex flex-1">
      <Sidebar />
      <div className="flex min-w-0 flex-1 flex-col">
        <main className="grid flex-1 grid-cols-[37fr_22fr] bg-[#f1f1f1] px-2.5 pt-2.5">
          <div className="flex min-w-0 flex-col">
            <div className="grid h-[300px] shrink-0 grid-cols-[33fr_41fr] overflow-hidden bg-white">
              <Constellation />
              <DataStream />
            </div>
            <TrackingStatus />
          </div>
          <MapPanel />
        </main>
        <Footer />
      </div>
    </div>
  </div>
);

export default App;
